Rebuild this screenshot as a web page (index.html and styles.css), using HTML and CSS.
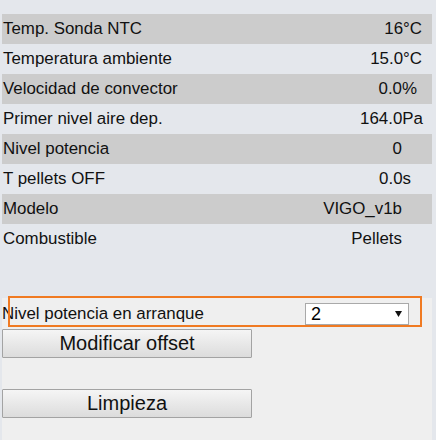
FILE: index.html
```html
<!DOCTYPE html>
<html lang="es">
<head>
<meta charset="utf-8">
<title>Parámetros</title>
<link rel="stylesheet" href="styles.css">
</head>
<body>
<div class="page">
  <div class="list">
    <div class="row odd"><span class="label">Temp. Sonda NTC</span><span class="value pr10">16°C</span></div>
    <div class="row"><span class="label">Temperatura ambiente</span><span class="value pr10">15.0°C</span></div>
    <div class="row odd"><span class="label">Velocidad de convector</span><span class="value pr15">0.0%</span></div>
    <div class="row"><span class="label">Primer nivel aire dep.</span><span class="value pr9">164.0Pa</span></div>
    <div class="row odd"><span class="label">Nivel potencia</span><span class="value pr30">0</span></div>
    <div class="row"><span class="label">T pellets OFF</span><span class="value pr21">0.0s</span></div>
    <div class="row odd"><span class="label">Modelo</span><span class="value pr30">VIGO_v1b</span></div>
    <div class="row"><span class="label">Combustible</span><span class="value pr30">Pellets</span></div>
  </div>
  <div class="controls">
    <div class="field">
      <label class="field-label" for="arranque">Nivel potencia en arranque</label>
      <span class="select-wrap">
        <select id="arranque" class="select">
          <option>1</option>
          <option selected>2</option>
          <option>3</option>
          <option>4</option>
          <option>5</option>
        </select>
        <svg class="arrow" width="7" height="6" viewBox="0 0 7 6"><path d="M0 0H7L3.5 6Z" fill="#111"/></svg>
      </span>
    </div>
    <button class="btn" type="button">Modificar offset</button>
    <button class="btn btn-second" type="button">Limpieza</button>
  </div>
</div>
</body>
</html>
```
FILE: styles.css
```css
html, body {
  margin: 0;
  padding: 0;
  height: 100%;
}
body {
  background: #e4e7ec;
  font-family: "Liberation Sans", Arial, sans-serif;
  color: #111;
  overflow: hidden;
}
.page {
  display: flex;
  flex-direction: column;
  height: 100%;
  padding: 14px 4px 0 2px;
  box-sizing: border-box;
}
.list {
  display: flex;
  flex-direction: column;
}
.row {
  display: flex;
  justify-content: space-between;
  height: 30px;
  line-height: 30px;
  font-size: 16.9px;
}
.row.odd {
  background: #cccccc;
}
.label {
  padding-left: 1px;
}
.pr9 { padding-right: 9px; }
.pr10 { padding-right: 10px; }
.pr15 { padding-right: 15px; }
.pr21 { padding-right: 21px; }
.pr30 { padding-right: 30px; }

.controls {
  flex: 1;
  margin-top: 44px;
  background: #efefef;
  display: flex;
  flex-direction: column;
  align-items: flex-start;
}
.field {
  position: relative;
  display: flex;
  align-items: center;
  height: 31px;
  width: 100%;
  font-size: 16.9px;
}
.field::after {
  content: "";
  position: absolute;
  left: 6px;
  top: -2px;
  width: 414px;
  height: 31px;
  border: 2px solid #f07a22;
  box-sizing: border-box;
  pointer-events: none;
}
.field-label {
  flex: 0 0 303px;
}
.select-wrap {
  position: relative;
  display: block;
  width: 104px;
  height: 22px;
}
.select {
  -webkit-appearance: none;
  appearance: none;
  width: 104px;
  height: 22px;
  margin: 0;
  padding: 0 0 0 5px;
  border: 1px solid #a9a9a9;
  border-radius: 0;
  background: #fff;
  font-family: "Liberation Sans", Arial, sans-serif;
  font-size: 18px;
  color: #000;
  outline: none;
}
.arrow {
  position: absolute;
  right: 7px;
  top: 8px;
  pointer-events: none;
}
.btn {
  width: 250px;
  height: 29px;
  margin: 0;
  padding: 0;
  border: 1px solid #a3a3a3;
  border-radius: 1px;
  background: linear-gradient(#f5f5f5, #dcdcdc);
  font-family: "Liberation Sans", Arial, sans-serif;
  font-size: 20px;
  color: #111;
  line-height: 27px;
}
.btn-second {
  margin-top: 31px;
}
```
